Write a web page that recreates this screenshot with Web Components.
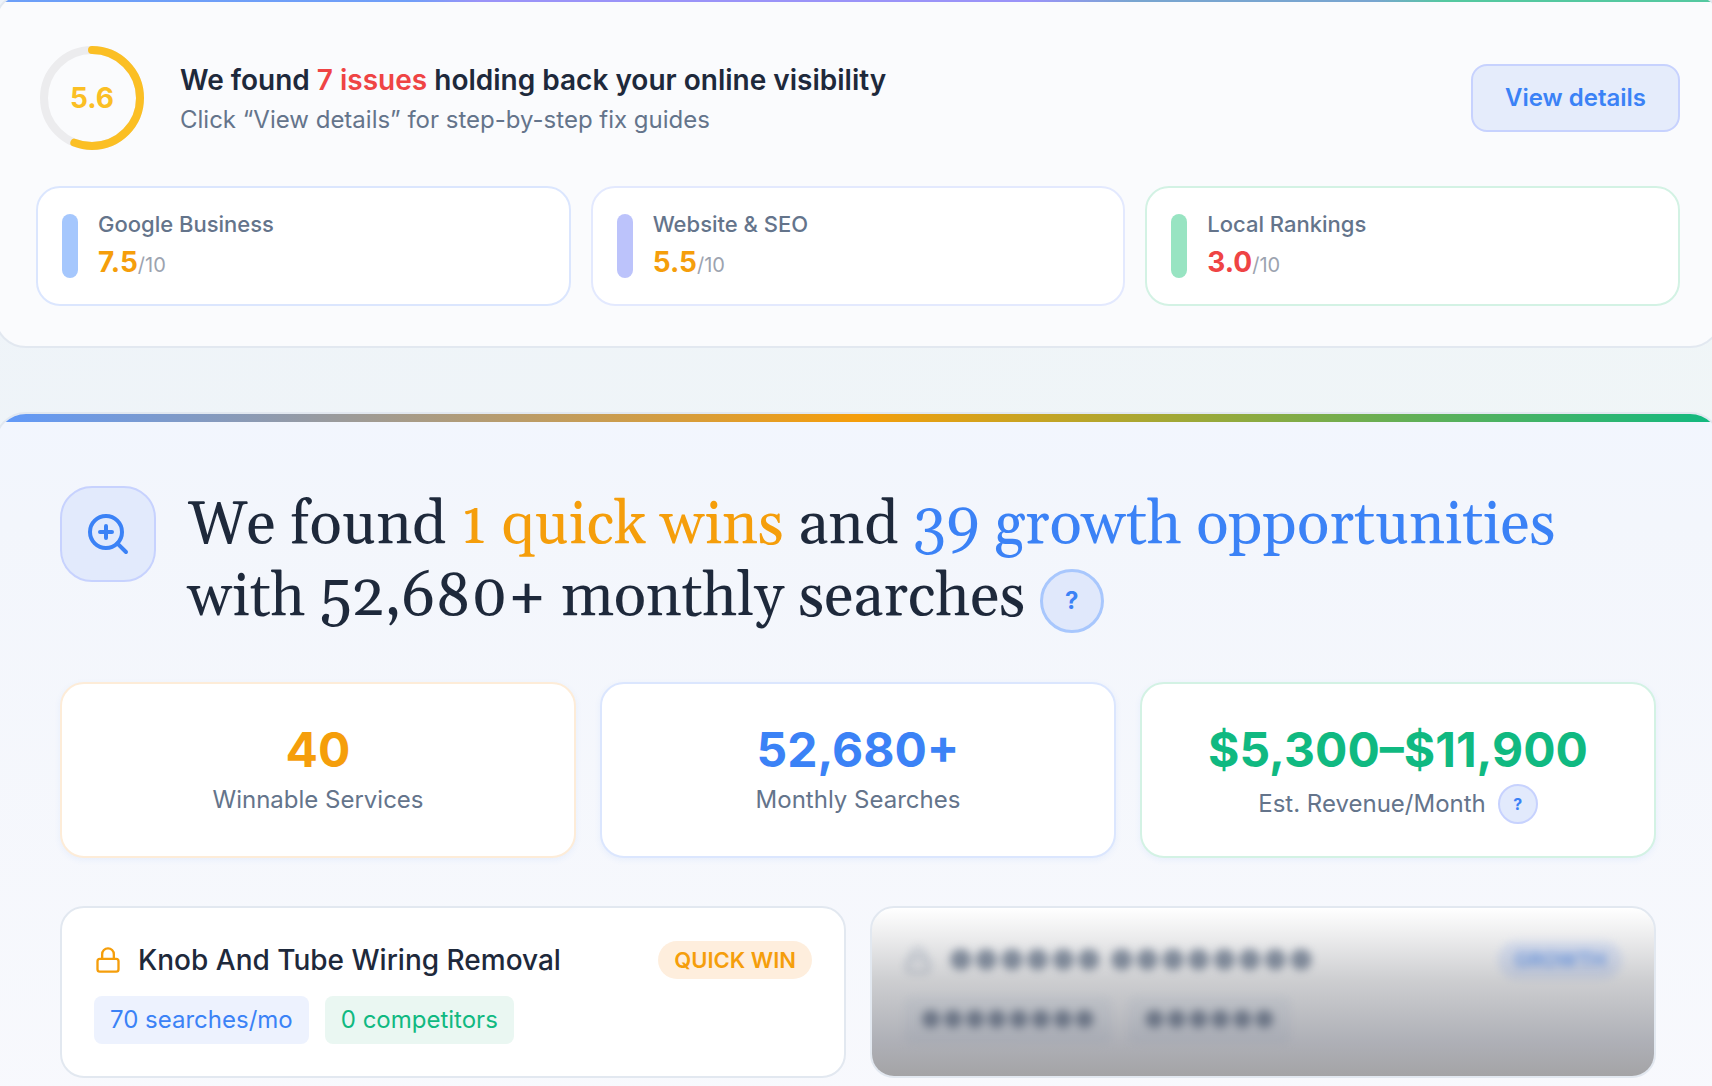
<!DOCTYPE html>
<html lang="en">
<head>
<meta charset="utf-8">
<title>Visibility report</title>
<style>
body {
  margin: 0;
  height: 100vh;
  overflow: hidden;
  background: linear-gradient(160deg, #eef3f9, #f1f7f6);
  font-family: Inter, "Liberation Sans", sans-serif;
  color: #1e293b;
}
main {
  margin: -8px -10px 0 -6px;
  display: flex;
  flex-direction: column;
  gap: 64px;
}
.grid {
  display: grid;
  grid-template-columns: repeat(3, 1fr);
  gap: 20px;
}
.grid.stats {
  gap: 24px;
}
.grid.services {
  grid-template-columns: repeat(2, 1fr);
  gap: 24px;
}
</style>
</head>
<body>
<main>
  <report-panel class="summary">
    <issue-header score="5.6">
      <span slot="title">We found <b>7 issues</b> holding back your online visibility</span>
      <span slot="text">Click “View details” for step-by-step fix guides</span>
    </issue-header>
    <div class="grid">
      <score-card color="blue" level="fair" label="Google Business" score="7.5"></score-card>
      <score-card color="indigo" level="fair" label="Website &amp; SEO" score="5.5"></score-card>
      <score-card color="green" level="poor" label="Local Rankings" score="3.0"></score-card>
    </div>
  </report-panel>

  <report-panel class="growth">
    <growth-header>
      We found <span class="wins">1 quick wins</span> and <span class="opps">39 growth opportunities</span>
      with 52,680+ monthly searches
    </growth-header>
    <div class="grid stats">
      <stat-card color="orange" value="40">Winnable Services</stat-card>
      <stat-card color="blue" value="52,680+">Monthly Searches</stat-card>
      <stat-card color="green" value="$5,300–$11,900">Est. Revenue/Month <help-button slot="help"></help-button></stat-card>
    </div>
    <div class="grid services">
      <service-card name="Knob And Tube Wiring Removal" badge="QUICK WIN" searches="70 searches/mo" competitors="0 competitors"></service-card>
      <service-card locked name="●●●●●● ●●●●●●●●" badge="GROWTH" searches="●●●●●●●●" competitors="●●●●●●"></service-card>
    </div>
  </report-panel>
</main>

<script>
// attach an open shadow root with the given markup
const render = (el, html) => {
  const template = document.createElement('template');
  template.innerHTML = html;
  el.attachShadow({ mode: 'open' }).appendChild(template.content.cloneNode(true));
};

const setText = (el, selector, text) => {
  el.shadowRoot.querySelector(selector).textContent = text;
};

class ReportPanel extends HTMLElement {
  constructor() {
    super();
    render(this, `
      <style>
        :host {
          display: block;
          overflow: hidden;
          border: 2px solid #e2e8f0;
          border-radius: 32px;
          background: #fafbfd;
        }
        .bar {
          height: 8px;
          background: linear-gradient(90deg, #6c9ff8, #709ef8 24%, #9a93f8 28%, #9a93f8 60%, #78a5d0 66%, #78a5d0 80%, #54c8a0 84%);
        }
        .body {
          display: flex;
          flex-direction: column;
          gap: 32px;
          padding: 40px;
        }
        :host(.growth) {
          background: linear-gradient(180deg, #f2f6fe, #f3f6fc 15%, #f8f9fd);
        }
        :host(.growth) .bar {
          background: linear-gradient(90deg, #5f99fb, #f59e0b 50%, #10b981);
        }
        :host(.growth) .body {
          gap: 48px;
          padding: 64px;
        }
      </style>
      <div class="bar"></div>
      <div class="body"><slot></slot></div>
    `);
  }
}

class ScoreRing extends HTMLElement {
  constructor() {
    super();
    render(this, `
      <style>
        :host { display: grid; flex: none; place-items: center; width: 112px; height: 112px; }
        svg, span { grid-area: 1 / 1; }
        svg { width: 112px; height: 112px; transform: rotate(-90deg); }
        circle { fill: none; stroke-width: 8; }
        .track { stroke: #ececee; }
        .value { stroke: #fbbf24; stroke-linecap: round; }
        span { font-size: 28px; line-height: 40px; font-weight: 700; color: #fbbf24; }
      </style>
      <svg viewBox="0 0 112 112" aria-hidden="true">
        <circle class="track" cx="56" cy="56" r="48"></circle>
        <circle class="value" cx="56" cy="56" r="48" pathLength="10"></circle>
      </svg>
      <span></span>
    `);
    const score = this.getAttribute('score');
    setText(this, 'span', score);
    this.shadowRoot.querySelector('.value').setAttribute('stroke-dasharray', score + ' 10');
  }
}

class IssueHeader extends HTMLElement {
  constructor() {
    super();
    render(this, `
      <style>
        :host { display: flex; align-items: center; gap: 32px; }
        .text { flex: 1; display: flex; flex-direction: column; gap: 4px; }
        h2, p { margin: 0; }
        h2 { font-size: 28px; line-height: 40px; font-weight: 600; }
        p { font-size: 24px; line-height: 32px; color: #64748b; }
        button {
          padding: 0 32px;
          height: 68px;
          border: 2px solid #c7d2fe;
          border-radius: 16px;
          background: #e5ecfb;
          font: 600 24px/32px Inter, "Liberation Sans", sans-serif;
          color: #3b82f6;
          cursor: pointer;
        }
      </style>
      <score-ring score="${this.getAttribute('score')}"></score-ring>
      <div class="text">
        <h2><slot name="title"></slot></h2>
        <p><slot name="text"></slot></p>
      </div>
      <button type="button">View details</button>
    `);
    this.querySelector('b').style.cssText = 'font-weight: inherit; color: #ef4444';
  }
}

class ScoreCard extends HTMLElement {
  constructor() {
    super();
    render(this, `
      <style>
        :host {
          --bar: #a5c7fd;
          display: flex;
          align-items: center;
          gap: 20px;
          padding: 20px 24px;
          border: 2px solid #dbe6fe;
          border-radius: 24px;
          background: #fff;
        }
        :host([color="indigo"]) { --bar: #bcc3fb; border-color: #e3e9fe; }
        :host([color="green"]) { --bar: #98e4c2; border-color: #d3f2e4; }
        .bar { width: 16px; height: 64px; border-radius: 8px; background: var(--bar); }
        .label { font-size: 22px; line-height: 32px; font-weight: 500; color: #64748b; }
        .score { font-size: 28px; line-height: 44px; }
        b { font-weight: 700; color: #f59e0b; }
        small { font-size: 20px; line-height: 32px; color: #9ca3af; }
        :host([level="poor"]) b { color: #ef4444; }
      </style>
      <div class="bar"></div>
      <div>
        <div class="label"></div>
        <div class="score"><b></b><small>/10</small></div>
      </div>
    `);
    setText(this, '.label', this.getAttribute('label'));
    setText(this, 'b', this.getAttribute('score'));
  }
}

class HelpButton extends HTMLElement {
  constructor() {
    super();
    render(this, `
      <style>
        :host { display: inline-block; vertical-align: middle; }
        button {
          display: block;
          width: 40px;
          height: 40px;
          padding: 0;
          border: 2px solid #c7d2fe;
          border-radius: 50%;
          background: #e2eafc;
          font: 700 16px/24px Inter, "Liberation Sans", sans-serif;
          color: #3b82f6;
          cursor: pointer;
        }
        :host([large]) button {
          width: 64px;
          height: 64px;
          border: 3px solid #a8c7fd;
          background: #e0e8fb;
          font-size: 24px;
        }
      </style>
      <button type="button" title="More info">?</button>
    `);
  }
}

class GrowthHeader extends HTMLElement {
  constructor() {
    super();
    render(this, `
      <style>
        :host { display: flex; align-items: flex-start; gap: 32px; }
        .icon {
          flex: none;
          display: grid;
          place-items: center;
          box-sizing: border-box;
          width: 96px;
          height: 96px;
          border: 2px solid #c7d2fe;
          border-radius: 32px;
          background: #e2eafc;
        }
        svg { width: 48px; height: 48px; fill: none; stroke: #3b82f6; stroke-width: 2; stroke-linecap: round; }
        h1 {
          margin: 0;
          padding-top: 4px;
          font-family: Georgia, Gelasio, "Liberation Serif", serif;
          font-size: 60px;
          line-height: 72px;
          font-weight: 400;
        }
        ::slotted(.wins) { color: #f59e0b; }
        ::slotted(.opps) { color: #3b82f6; }
      </style>
      <div class="icon">
        <svg viewBox="0 0 24 24" aria-hidden="true">
          <circle cx="11" cy="11" r="8"></circle>
          <path d="M21 21l-4.35-4.35M11 8v6M8 11h6"></path>
        </svg>
      </div>
      <h1><slot></slot><help-button large></help-button></h1>
    `);
  }
}

class StatCard extends HTMLElement {
  constructor() {
    super();
    render(this, `
      <style>
        :host {
          --accent: #3b82f6;
          padding: 32px;
          border: 2px solid #dbe6fe;
          border-radius: 24px;
          background: #fff;
          box-shadow: 0 2px 6px rgba(59, 130, 246, .08);
          text-align: center;
        }
        :host([color="orange"]) { --accent: #f59e0b; border-color: #fdecd8; }
        :host([color="green"]) { --accent: #10b981; border-color: #d3f2e4; }
        .value { font-size: 48px; line-height: 68px; font-weight: 700; color: var(--accent); }
        .label {
          display: flex;
          justify-content: center;
          align-items: center;
          gap: 12px;
          font-size: 24px;
          line-height: 32px;
          color: #64748b;
        }
      </style>
      <div class="value"></div>
      <div class="label"><span><slot></slot></span><slot name="help"></slot></div>
    `);
    setText(this, '.value', this.getAttribute('value'));
  }
}

class ServiceCard extends HTMLElement {
  constructor() {
    super();
    render(this, `
      <style>
        :host {
          position: relative;
          overflow: hidden;
          border: 2px solid #e2e8f0;
          border-radius: 24px;
          background: #fff;
        }
        .content { display: flex; flex-direction: column; gap: 16px; padding: 32px; }
        .head { display: flex; align-items: center; gap: 16px; height: 40px; }
        svg { flex: none; width: 28px; height: 28px; fill: none; stroke: #f59e0b; stroke-width: 2; stroke-linecap: round; stroke-linejoin: round; }
        h3 { flex: 1; margin: 0; font-size: 28px; line-height: 40px; font-weight: 500; }
        .badge {
          padding: 3px 16px;
          border-radius: 20px;
          background: #feeedd;
          font-size: 22px;
          line-height: 32px;
          font-weight: 600;
          color: #f59e0b;
        }
        .chips { display: flex; gap: 16px; }
        .chips span { padding: 8px 16px; border-radius: 8px; font-size: 24px; line-height: 32px; }
        .searches { background: #edf2fe; color: #3b82f6; }
        .competitors { background: #eaf7f2; color: #10b981; }

        /* locked cards: blurred content under a dark fade */
        :host([locked]) .content { filter: blur(4px); opacity: .7; user-select: none; }
        :host([locked]) svg { stroke: #94a3b8; }
        :host([locked]) h3 { color: #64748b; }
        :host([locked]) .badge { background: #dbe6fe; font-size: 20px; color: #3b82f6; }
        :host([locked]) .chips span { background: #f1f5f9; color: #64748b; }
        :host([locked])::after {
          content: "";
          position: absolute;
          inset: 0;
          background: linear-gradient(180deg, rgba(20, 20, 30, 0), rgba(20, 22, 34, .09) 19%, rgba(20, 24, 36, .21) 43%, rgba(20, 24, 44, .34) 79%, rgba(20, 20, 26, .39));
        }
      </style>
      <div class="content">
        <div class="head">
          <svg viewBox="0 0 24 24" aria-hidden="true">
            <rect x="3" y="11" width="18" height="11" rx="2"></rect>
            <path d="M7 11V7a5 5 0 0 1 10 0v4"></path>
          </svg>
          <h3></h3>
          <span class="badge"></span>
        </div>
        <div class="chips">
          <span class="searches"></span>
          <span class="competitors"></span>
        </div>
      </div>
    `);
    setText(this, 'h3', this.getAttribute('name'));
    setText(this, '.badge', this.getAttribute('badge'));
    setText(this, '.searches', this.getAttribute('searches'));
    setText(this, '.competitors', this.getAttribute('competitors'));
  }
}

window.customElements.define('report-panel', ReportPanel);
window.customElements.define('score-ring', ScoreRing);
window.customElements.define('issue-header', IssueHeader);
window.customElements.define('score-card', ScoreCard);
window.customElements.define('help-button', HelpButton);
window.customElements.define('growth-header', GrowthHeader);
window.customElements.define('stat-card', StatCard);
window.customElements.define('service-card', ServiceCard);
</script>
</body>
</html>
